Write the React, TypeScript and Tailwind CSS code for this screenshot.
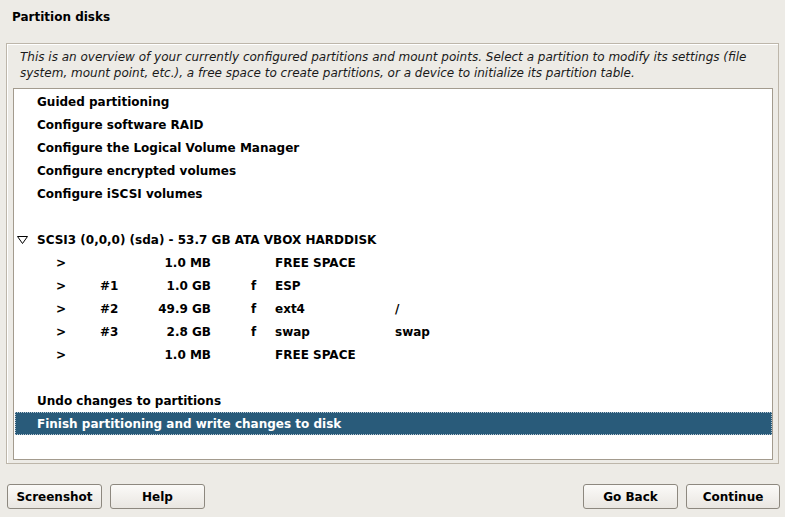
import React from "react";

const font = { fontFamily: '"DejaVu Sans", Verdana, sans-serif' };

function Triangle() {
  return (
    <svg width="11" height="8" viewBox="0 0 11 8" className="shrink-0">
      <path d="M0.5 0.5 L10.5 0.5 L5.5 7.5 Z" fill="none" stroke="#000" strokeWidth="1" />
    </svg>
  );
}

function Item({ children }: { children: React.ReactNode }) {
  return <div className="h-[23px] flex items-center pl-[23px]">{children}</div>;
}

function Part({ num, size, f, fs, mount }: { num: string; size: string; f: string; fs: string; mount: string }) {
  return (
    <div className="h-[23px] flex items-center pl-[42px]">
      <span className="w-[44px]">&gt;</span>
      <span className="w-[50px]">{num}</span>
      <span className="w-[61px] text-right">{size}</span>
      <span className="w-[40px]" />
      <span className="w-[24px]">{f}</span>
      <span className="w-[120px]">{fs}</span>
      <span>{mount}</span>
    </div>
  );
}

function Btn({ label, w }: { label: string; w: string }) {
  return (
    <button
      className={`${w} h-[25px] rounded-[3px] border border-[#8d887f] bg-gradient-to-b from-[#fbfaf8] to-[#e9e6e1] text-[12px] font-bold text-black flex items-center justify-center`}
    >
      {label}
    </button>
  );
}

export default function App() {
  return (
    <div className="w-[785px] h-[517px] bg-[#edebe6] text-black overflow-hidden" style={font}>
      <div className="h-[43px] pl-[12px] pt-[9px] text-[12px] font-bold leading-[16px]">Partition disks</div>
      <div className="ml-[6px] w-[773px] h-[421px] border border-[#bdb6aa] shadow-[inset_1px_1px_0_#fff] flex flex-col pl-[6px] pr-[5px] pb-[3px]">
        <div className="pl-[7px] pt-[5px] h-[44px] text-[12px] italic leading-[16px] text-[#1a1a1a]">
          This is an overview of your currently configured partitions and mount points. Select a partition to modify its settings (file system, mount point, etc.), a free space to create partitions, or a device to initialize its partition table.
        </div>
        <div className="flex-1 bg-white border border-[#a39b8e] pt-[1px] text-[12px] font-bold leading-[16px]">
          <Item>Guided partitioning</Item>
          <Item>Configure software RAID</Item>
          <Item>Configure the Logical Volume Manager</Item>
          <Item>Configure encrypted volumes</Item>
          <Item>Configure iSCSI volumes</Item>
          <div className="h-[23px]" />
          <div className="h-[23px] flex items-center pl-[3px]">
            <Triangle />
            <span className="ml-[9px]">SCSI3 (0,0,0) (sda) - 53.7 GB ATA VBOX HARDDISK</span>
          </div>
          <Part num="" size="1.0 MB" f="" fs="FREE SPACE" mount="" />
          <Part num="#1" size="1.0 GB" f="f" fs="ESP" mount="" />
          <Part num="#2" size="49.9 GB" f="f" fs="ext4" mount="/" />
          <Part num="#3" size="2.8 GB" f="f" fs="swap" mount="swap" />
          <Part num="" size="1.0 MB" f="" fs="FREE SPACE" mount="" />
          <div className="h-[23px]" />
          <Item>Undo changes to partitions</Item>
          <div className="ml-[1px] h-[23px] flex items-center pl-[22px] bg-[#295b7a] text-white outline-1 outline-dotted outline-[#b7c6d1] -outline-offset-1">
            Finish partitioning and write changes to disk
          </div>
        </div>
      </div>
      <div className="flex items-center pt-[20px] pl-[7px] pr-[5px]">
        <div className="flex gap-[8px]">
          <Btn label="Screenshot" w="w-[95px]" />
          <Btn label="Help" w="w-[95px]" />
        </div>
        <div className="flex-1" />
        <div className="flex gap-[8px]">
          <Btn label="Go Back" w="w-[95px]" />
          <Btn label="Continue" w="w-[94px]" />
        </div>
      </div>
    </div>
  );
}
